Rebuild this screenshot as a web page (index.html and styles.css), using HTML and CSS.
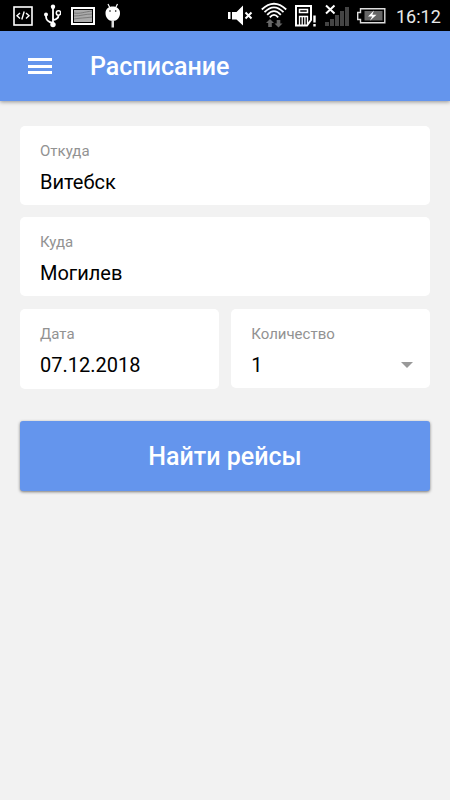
FILE: index.html
```html
<!DOCTYPE html>
<html lang="ru">
<head>
  <meta charset="UTF-8">
  <meta name="viewport" content="width=device-width, initial-scale=1.0">
  <title>Расписание</title>
  <link rel="stylesheet" href="styles.css">
</head>
<body>
  <div class="status-bar">
    <div class="status-left">
      <svg width="20" height="31" viewBox="0 0 20 31" fill="none" stroke="#fff">
        <rect x="1" y="7" width="18" height="18" stroke-width="1.6"/>
        <path d="M7 13l-3 2.7 3 2.7M13 13l3 2.7-3 2.7M11.2 11.5l-2.4 8" stroke-width="1.4"/>
      </svg>
      <svg width="18" height="31" viewBox="0 0 18 31" fill="none" stroke="#fff" stroke-width="1.8">
        <path d="M10 7v17M3 15v1.5c0 3 1.5 5.5 7 6.5M15.5 15.5c0 3-2 4-5.5 4.5"/>
        <circle cx="15.5" cy="13" r="2.2" stroke-width="1.5"/>
        <circle cx="10" cy="6.8" r="2.2" fill="#fff" stroke="none"/>
        <circle cx="3" cy="14.6" r="2" fill="#fff" stroke="none"/>
        <circle cx="10" cy="24.6" r="2.7" fill="#fff" stroke="none"/>
      </svg>
      <svg width="24" height="31" viewBox="0 0 24 31">
        <rect x="1" y="8" width="22" height="16" fill="#000" stroke="#fff" stroke-width="2"/>
        <rect x="3" y="10" width="18" height="12" fill="#aaa"/>
        <path d="M3 13c6 1 10-1 18-2M3 16c7 0 11-2 18-2M3 19c5-1 11-1 18-2" fill="none" stroke="#666" stroke-width=".7"/>
      </svg>
      <svg width="16" height="31" viewBox="0 0 16 31" fill="#fff">
        <path d="M3 4l2 4M12.5 4l-2 4" stroke="#fff" stroke-width="1.2"/>
        <path d="M.5 13C.5 9 3.5 6.5 7.7 6.5S15 9 15 13c0 4.5-3 8-7.3 8S.5 17.5.5 13z"/>
        <path d="M6.5 20h2.5v7.5h-2.5z" fill="#ddd"/>
        <circle cx="5" cy="11" r=".8" fill="#000"/>
        <circle cx="10.7" cy="11" r=".8" fill="#000"/>
      </svg>
    </div>
    <div class="status-right">
      <svg width="25" height="31" viewBox="0 0 25 31" fill="#fff">
        <path d="M0 12h2.5v7H0zM4 12h4.5L15 5.5v20L8.5 19.5H4z"/>
        <path d="M17.5 12.5l6 6M23.5 12.5l-6 6" stroke="#fff" stroke-width="2"/>
      </svg>
      <svg width="26" height="31" viewBox="0 0 26 31" fill="none" stroke="#fff" stroke-width="1.8">
        <path d="M.8 9.5Q13-2 25.2 9.5M3.5 12.2Q13 2.5 22.5 12.2M6.2 14.8Q13 7.5 19.8 14.8M8.8 17.3Q13 12.5 17.2 17.3"/>
        <path d="M9 19l4 4h-2.2v4H7.2v-4H5zM17.5 27.5l-4-4h2.2V20h3.6v3.5h2.2z" fill="#666" stroke="none"/>
      </svg>
      <svg width="22" height="31" viewBox="0 0 22 31" fill="none" stroke="#fff" stroke-width="2">
        <path d="M1 6h15v14l-4 5.5H1z"/>
        <path d="M4.5 9.5h8v3h-8z" stroke-width="1.5"/>
        <path d="M4.5 25v-8.500h8V24M7.2 16.5V25M9.900 16.5V25" stroke-width="1.3"/>
        <path d="M19.5 15.5v7M19.5 24v2.5" stroke-width="2.4"/>
      </svg>
      <svg width="24" height="31" viewBox="0 0 24 31">
        <path d="M0 22h4v4H0zM5 19h4v7H5zM10 15h4v11h-4zM15 11h4v15h-4zM20 7h4v19h-4z" fill="#444"/>
        <path d="M1 5.5l8.5 8M9.5 5.5l-8.5 8" stroke="#fff" stroke-width="2"/>
      </svg>
      <svg width="31" height="31" viewBox="0 0 31 31">
        <path d="M3.5 8.7h24.3v14H3.5v-3.2H.7v-7h2.8z" fill="none" stroke="#ddd" stroke-width="1.4"/>
        <path d="M7.5 11h18v9.5h-18z" fill="#666"/>
        <path d="M17 10.5l-6 6h4.2l-2.2 4.2 6.5-6h-4.2z" fill="#fff"/>
      </svg>
      <span class="clock">16:12</span>
    </div>
  </div>

  <header class="toolbar">
    <button class="menu-button" type="button" aria-label="Меню">
      <span></span>
      <span></span>
      <span></span>
    </button>
    <h1>Расписание</h1>
  </header>

  <main class="search-form">
    <div class="field">
      <span class="label">Откуда</span>
      <span class="value">Витебск</span>
    </div>
    <div class="field">
      <span class="label">Куда</span>
      <span class="value">Могилев</span>
    </div>
    <div class="row">
      <div class="field field-date">
        <span class="label">Дата</span>
        <span class="value">07.12.2018</span>
      </div>
      <div class="field">
        <span class="label">Количество</span>
        <span class="value select">1 <i class="arrow"></i></span>
      </div>
    </div>
    <button class="search-button" type="button">Найти рейсы</button>
  </main>
</body>
</html>
```

FILE: styles.css
```css
* {
  box-sizing: border-box;
}
body {
  margin: 0;
  min-height: 100vh;
  background-color: #f2f2f2;
  font-family: Roboto, "Liberation Sans", sans-serif;
  color: #000;
}
.status-bar {
  display: flex;
  justify-content: space-between;
  height: 31px;
  padding: 0 10px 0 13px;
  background-color: #000;
}
.status-left,
.status-right {
  display: flex;
}
.status-left {
  gap: 10px;
}
.status-right {
  gap: 8px;
}
.clock {
  width: 44px;
  color: #e8e8e8;
  font-size: 18px;
  line-height: 33px;
  white-space: nowrap;
}
.toolbar {
  display: flex;
  align-items: center;
  height: 70px;
  padding-left: 28px;
  background-color: #6495ed;
  box-shadow: 0 1px 4px rgba(0, 0, 0, 0.4);
}
.menu-button {
  display: flex;
  flex-direction: column;
  gap: 3.5px;
  width: 24px;
  margin-right: 38px;
  padding: 0;
  border: none;
  background: none;
}
.menu-button span {
  height: 3px;
  background-color: #fff;
}
h1 {
  margin: 0;
  padding-top: 2px;
  color: #fff;
  font-size: 25px;
  font-weight: 500;
  line-height: 30px;
}
.search-form {
  display: flex;
  flex-direction: column;
  gap: 12.4px;
  padding: 25px 20px;
}
.field {
  display: flex;
  flex-direction: column;
  height: 79px;
  padding: 15px 16px 0 20px;
  border-radius: 5px;
  background-color: #fff;
}
.label {
  color: #929292;
  font-size: 15px;
  line-height: 20px;
}
.value {
  margin-top: 8px;
  font-size: 20px;
  line-height: 26px;
}
.row {
  display: flex;
  align-items: flex-start;
  gap: 12.5px;
}
.row .field {
  flex: 1;
}
.row .field-date {
  height: 80px;
}
.select {
  display: flex;
  justify-content: space-between;
  align-items: center;
}
.arrow {
  margin-right: 1px;
  border-top: 6px solid #999;
  border-left: 6px solid transparent;
  border-right: 6px solid transparent;
}
.search-button {
  height: 70px;
  margin-top: 19.8px;
  padding-top: 3px;
  border: none;
  border-radius: 3px;
  background-color: #6495ed;
  box-shadow: 0 1px 3px rgba(0, 0, 0, 0.5);
  color: #fff;
  font-family: inherit;
  font-size: 25px;
  font-weight: 500;
}
```
